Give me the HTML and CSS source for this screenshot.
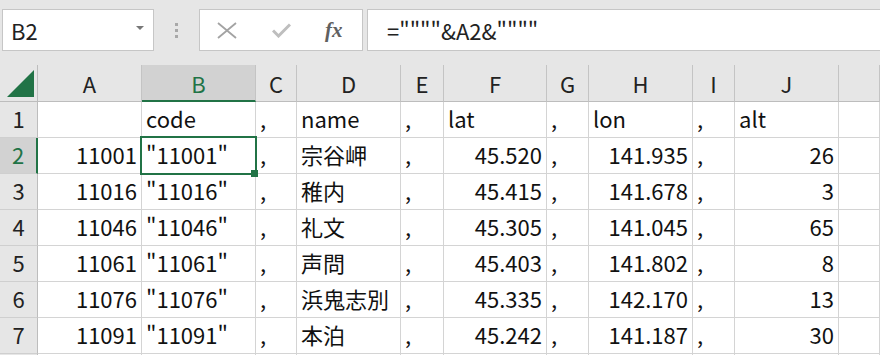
FILE: index.html
```html
<!DOCTYPE html>
<html lang="ja">
<head>
  <meta charset="UTF-8" />
  <title>Sheet</title>
  <link rel="stylesheet" href="styles.css">
</head>
<body>
  <div class="toolbar">
    <div class="name-box">
      <span>B2</span>
      <span class="drop"></span>
    </div>
    <div class="grip"><i></i><i></i><i></i></div>
    <div class="fn-box">
      <svg class="ic-x" width="20" height="17" viewBox="0 0 20 17"><path d="M1 1 L19 16 M19 1 L1 16" stroke="#a3a3a3" stroke-width="1.8" fill="none"/></svg>
      <svg class="ic-ok" width="19" height="15" viewBox="0 0 19 15"><path d="M1 7.5 L6.5 13 L18 1.5" stroke="#bebebe" stroke-width="3" fill="none"/></svg>
      <span class="fx">fx</span>
    </div>
    <div class="formula">=""""&amp;A2&amp;""""</div>
  </div>

  <div class="sheet">
    <div class="corner"><span class="tri"></span></div>
    <div class="ch">A</div><div class="ch active">B</div><div class="ch">C</div><div class="ch">D</div>
    <div class="ch">E</div><div class="ch">F</div><div class="ch">G</div><div class="ch">H</div>
    <div class="ch">I</div><div class="ch">J</div><div class="ch"></div>

    <div class="rh">1</div>
    <div class="c"></div><div class="c">code</div><div class="c">,</div><div class="c">name</div><div class="c">,</div>
    <div class="c">lat</div><div class="c">,</div><div class="c">lon</div><div class="c">,</div><div class="c">alt</div><div class="c"></div>

    <div class="rh active">2</div>
    <div class="c n">11001</div><div class="c sel-cell">"11001"<span class="sel"></span><span class="handle"></span></div><div class="c">,</div><div class="c">宗谷岬</div><div class="c">,</div>
    <div class="c n">45.520</div><div class="c">,</div><div class="c n">141.935</div><div class="c">,</div><div class="c n">26</div><div class="c"></div>

    <div class="rh">3</div>
    <div class="c n">11016</div><div class="c">"11016"</div><div class="c">,</div><div class="c">稚内</div><div class="c">,</div>
    <div class="c n">45.415</div><div class="c">,</div><div class="c n">141.678</div><div class="c">,</div><div class="c n">3</div><div class="c"></div>

    <div class="rh">4</div>
    <div class="c n">11046</div><div class="c">"11046"</div><div class="c">,</div><div class="c">礼文</div><div class="c">,</div>
    <div class="c n">45.305</div><div class="c">,</div><div class="c n">141.045</div><div class="c">,</div><div class="c n">65</div><div class="c"></div>

    <div class="rh">5</div>
    <div class="c n">11061</div><div class="c">"11061"</div><div class="c">,</div><div class="c">声問</div><div class="c">,</div>
    <div class="c n">45.403</div><div class="c">,</div><div class="c n">141.802</div><div class="c">,</div><div class="c n">8</div><div class="c"></div>

    <div class="rh">6</div>
    <div class="c n">11076</div><div class="c">"11076"</div><div class="c">,</div><div class="c">浜鬼志別</div><div class="c">,</div>
    <div class="c n">45.335</div><div class="c">,</div><div class="c n">142.170</div><div class="c">,</div><div class="c n">13</div><div class="c"></div>

    <div class="rh">7</div>
    <div class="c n">11091</div><div class="c">"11091"</div><div class="c">,</div><div class="c">本泊</div><div class="c">,</div>
    <div class="c n">45.242</div><div class="c">,</div><div class="c n">141.187</div><div class="c">,</div><div class="c n">30</div><div class="c"></div>

    <!-- next row, only its top edge shows -->
    <div class="rh"></div>
    <div class="c"></div><div class="c"></div><div class="c"></div><div class="c"></div><div class="c"></div>
    <div class="c"></div><div class="c"></div><div class="c"></div><div class="c"></div><div class="c"></div><div class="c"></div>
  </div>
</body>
</html>
```

FILE: styles.css
```css
body {
  margin: 0;
  width: 880px;
  height: 355px;
  overflow: hidden;
  background: #ffffff;
  font-family: "Noto Sans CJK JP", "Noto Sans", sans-serif;
  color: #111;
}

/* formula bar */
.toolbar {
  height: 65px;
  background: #e6e6e6;
  display: flex;
  align-items: flex-start;
  padding-top: 9px;
  box-sizing: border-box;
}

.name-box, .fn-box, .formula {
  height: 42px;
  box-sizing: border-box;
  background: #fff;
  border: 1px solid #c6c6c6;
  display: flex;
  align-items: center;
}

.name-box {
  margin-left: 2px;
  width: 152px;
  padding: 0 9px 0 8px;
  justify-content: space-between;
  font-size: 22px;
  color: #222;
}

.drop {
  width: 0;
  height: 0;
  border-left: 4px solid transparent;
  border-right: 4px solid transparent;
  border-top: 4px solid #777;
  margin-bottom: 4px;
}

.grip {
  width: 45px;
  height: 42px;
  display: flex;
  flex-direction: column;
  align-items: center;
  justify-content: center;
  gap: 3px;
}

.grip i {
  width: 3px;
  height: 3px;
  background: #a8a8a8;
}

.fn-box {
  width: 164px;
  padding-left: 17px;
}

.ic-x { margin-top: 1px; }
.ic-ok { margin-left: 35px; margin-top: 1px; }

.fx {
  margin-left: 34px;
  font-family: "Liberation Serif", serif;
  font-style: italic;
  font-weight: bold;
  font-size: 21px;
  color: #606060;
}

.formula {
  margin-left: 4px;
  flex: 1;
  border-right: none;
  padding-left: 19px;
  font-size: 22px;
  color: #222;
}

/* grid */
.sheet {
  display: grid;
  grid-template-columns: 38px 104px 114px 41px 104px 43px 103px 42px 104px 42px 104px 1fr;
  grid-template-rows: 37px repeat(8, 36px);
  font-size: 22px;
}

.sheet > div {
  box-sizing: border-box;
  line-height: 33px;
  white-space: nowrap;
}

.corner, .ch, .rh {
  background: #e6e6e6;
  color: #222;
  text-align: center;
}

.corner {
  border-right: 1px solid #bdbdbd;
  border-bottom: 1px solid #bdbdbd;
  position: relative;
}

.tri {
  position: absolute;
  left: 7px;
  bottom: 4px;
  width: 0;
  height: 0;
  border-left: 27px solid transparent;
  border-bottom: 27px solid #217346;
}

.ch {
  border-right: 1px solid #c4c4c4;
  border-bottom: 1px solid #bdbdbd;
  padding-top: 2px;
}

.ch.active {
  background: #d2d2d2;
  color: #217346;
  border-bottom: 2px solid #217346;
}

.rh {
  border-right: 1px solid #bdbdbd;
  border-bottom: 1px solid #cfcfcf;
}

.rh.active {
  background: #d2d2d2;
  color: #217346;
  border-right: 2px solid #217346;
}

.c {
  border-right: 1px solid #d4d4d4;
  border-bottom: 1px solid #d4d4d4;
  padding: 0 4px;
}

.c.n {
  text-align: right;
}

.sel-cell {
  position: relative;
}

.sel {
  position: absolute;
  left: -2px;
  top: -2px;
  right: -2px;
  bottom: -2px;
  border: 2px solid #217346;
}

.handle {
  position: absolute;
  left: 109px;
  top: 32px;
  width: 7px;
  height: 7px;
  background: #217346;
}
```
